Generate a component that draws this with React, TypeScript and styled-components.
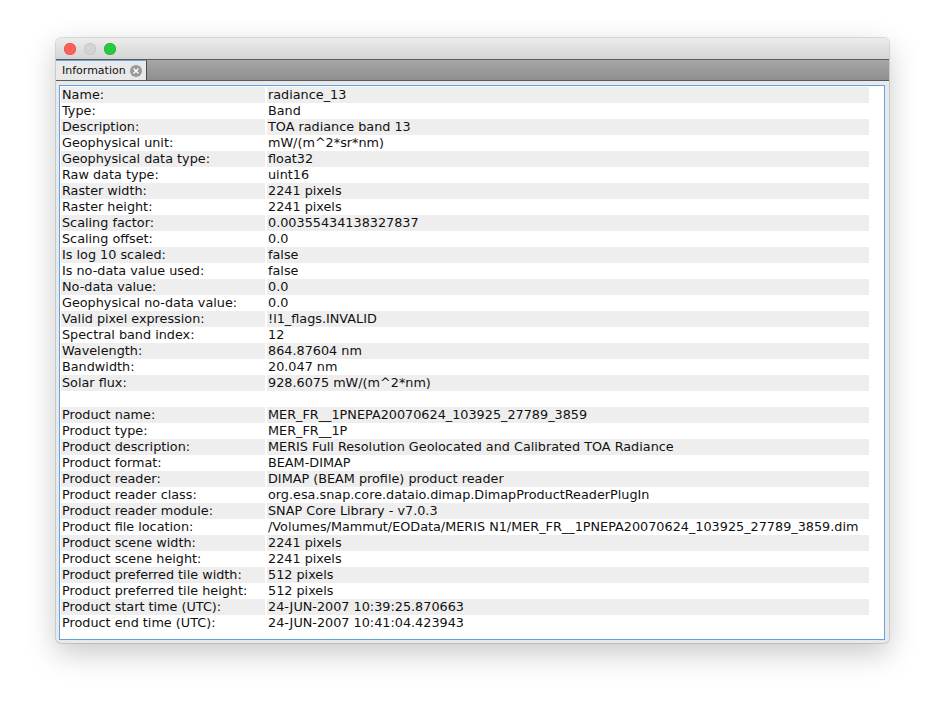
import React from 'react'
import styled, { createGlobalStyle } from 'styled-components'

const Global = createGlobalStyle`
    html, body {
        margin: 0;
        padding: 0;
        background: #ffffff;
    }
    body {
        font-family: "DejaVu Sans", "Liberation Sans", sans-serif;
    }
`

const Page = styled.div`
    padding: 38px 0 0 56px;
    width: 945px;
    height: 718px;
    box-sizing: border-box;
`

const Window = styled.div`
    width: 833px;
    height: 605px;
    display: flex;
    flex-direction: column;
    border-radius: 5px;
    overflow: hidden;
    background: #e9e9e9;
    box-shadow: 0 0 0 1px rgba(0, 0, 0, 0.12), 0 10px 30px rgba(0, 0, 0, 0.22);
`

const TitleBar = styled.div`
    height: 21px;
    flex: none;
    display: flex;
    align-items: center;
    gap: 8px;
    padding-left: 8px;
    background: linear-gradient(#ececec, #d5d5d5);
    border-bottom: 1px solid #5c5c5c;
`

const Light = styled.span<{ $color: string; $ring: string }>`
    width: 12px;
    height: 12px;
    border-radius: 50%;
    background: ${p => p.$color};
    box-shadow: inset 0 0 0 0.5px ${p => p.$ring};
`

const TabBar = styled.div`
    height: 20px;
    flex: none;
    display: flex;
    background: linear-gradient(#a6a6a6, #8f8f8f);
    border-bottom: 1px solid #5a5a5a;
`

const Tab = styled.div`
    width: 91px;
    display: flex;
    align-items: center;
    gap: 4px;
    padding-left: 6px;
    box-sizing: border-box;
    background: #e9e9e9;
    border-top: 1px solid #6aa3e0;
    border-right: 1px solid #4a4a4a;
    font-size: 11px;
    color: #111;
`

const CloseIcon = styled.span`
    width: 12px;
    height: 12px;
    border-radius: 50%;
    background: #9a9a9a;
    display: flex;
    align-items: center;
    justify-content: center;
`

const Body = styled.div`
    flex: 1;
    padding: 4px 4px 3px 3px;
    display: flex;
`

const Panel = styled.div`
    flex: 1;
    border: 1px solid #5ea2e8;
    background: #ffffff;
    padding: 1px 15px 0 1px;
`

const Row = styled.div`
    display: grid;
    grid-template-columns: 204px 602px;
    column-gap: 2px;
    height: 16px;
    line-height: 15px;
    font-size: 12.8px;
    color: #111;
    white-space: nowrap;
`

const Cell = styled.div<{ $striped: boolean }>`
    background: ${p => (p.$striped ? '#eeeeee' : 'transparent')};
    padding-left: 1px;
    overflow: hidden;
`

const rows: [string, string][] = [
    ['Name:', 'radiance_13'],
    ['Type:', 'Band'],
    ['Description:', 'TOA radiance band 13'],
    ['Geophysical unit:', 'mW/(m^2*sr*nm)'],
    ['Geophysical data type:', 'float32'],
    ['Raw data type:', 'uint16'],
    ['Raster width:', '2241 pixels'],
    ['Raster height:', '2241 pixels'],
    ['Scaling factor:', '0.00355434138327837'],
    ['Scaling offset:', '0.0'],
    ['Is log 10 scaled:', 'false'],
    ['Is no-data value used:', 'false'],
    ['No-data value:', '0.0'],
    ['Geophysical no-data value:', '0.0'],
    ['Valid pixel expression:', '!l1_flags.INVALID'],
    ['Spectral band index:', '12'],
    ['Wavelength:', '864.87604 nm'],
    ['Bandwidth:', '20.047 nm'],
    ['Solar flux:', '928.6075 mW/(m^2*nm)'],
    ['', ''],
    ['Product name:', 'MER_FR__1PNEPA20070624_103925_27789_3859'],
    ['Product type:', 'MER_FR__1P'],
    ['Product description:', 'MERIS Full Resolution Geolocated and Calibrated TOA Radiance'],
    ['Product format:', 'BEAM-DIMAP'],
    ['Product reader:', 'DIMAP (BEAM profile) product reader'],
    ['Product reader class:', 'org.esa.snap.core.dataio.dimap.DimapProductReaderPlugIn'],
    ['Product reader module:', 'SNAP Core Library - v7.0.3'],
    ['Product file location:', '/Volumes/Mammut/EOData/MERIS N1/MER_FR__1PNEPA20070624_103925_27789_3859.dim'],
    ['Product scene width:', '2241 pixels'],
    ['Product scene height:', '2241 pixels'],
    ['Product preferred tile width:', '512 pixels'],
    ['Product preferred tile height:', '512 pixels'],
    ['Product start time (UTC):', '24-JUN-2007 10:39:25.870663'],
    ['Product end time (UTC):', '24-JUN-2007 10:41:04.423943'],
]

const App = () => {
    return (
        <Page>
            <Global />
            <Window>
                <TitleBar>
                    <Light $color="#fe5f57" $ring="#e0443e" />
                    <Light $color="#d3d3d3" $ring="#bdbdbd" />
                    <Light $color="#28c840" $ring="#1aab29" />
                </TitleBar>
                <TabBar>
                    <Tab>
                        Information
                        <CloseIcon>
                            <svg width="6" height="6" viewBox="0 0 6 6">
                                <path d="M0.5 0.5 L5.5 5.5 M5.5 0.5 L0.5 5.5" stroke="#fff" strokeWidth="1.4" />
                            </svg>
                        </CloseIcon>
                    </Tab>
                </TabBar>
                <Body>
                    <Panel>
                        {rows.map(([label, value], i) => (
                            <Row key={i}>
                                <Cell $striped={i % 2 === 0}>{label}</Cell>
                                <Cell $striped={i % 2 === 0}>{value}</Cell>
                            </Row>
                        ))}
                    </Panel>
                </Body>
            </Window>
        </Page>
    )
}

export default App
